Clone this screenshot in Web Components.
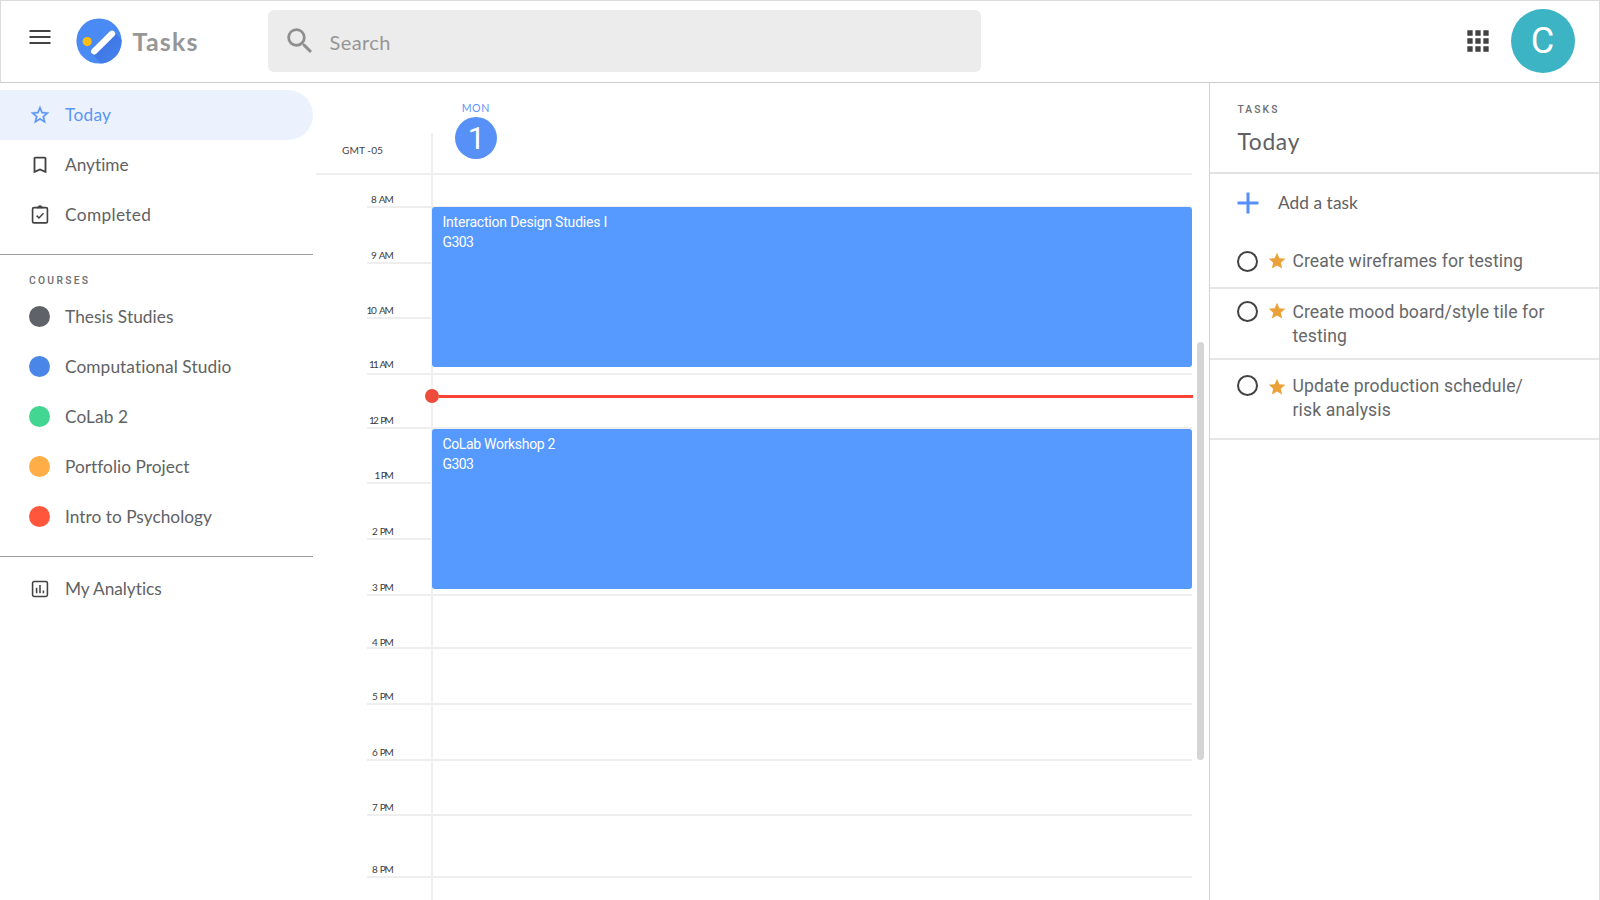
<!DOCTYPE html>
<html lang="en">
<head>
<meta charset="utf-8">
<title>Tasks</title>
<style>
html,body{margin:0;height:100%;overflow:hidden;background:#fff}
body{font-family:Lato,"Open Sans",sans-serif;color:#5f6063}
</style>
</head>
<body>
<tasks-app></tasks-app>
<script>
const define = (name, css, html, ready) => customElements.define(name, class extends HTMLElement {
  connectedCallback() {
    if (this.shadowRoot) return;
    const t = document.createElement('template');
    const a = k => this.getAttribute(k) || '';
    t.innerHTML = `<style>*{box-sizing:border-box}${css}</style>` + (typeof html === 'function' ? html(a) : html);
    this.attachShadow({ mode: 'open' }).append(t.content.cloneNode(true));
    if (ready) ready(this, a);
  }
});

const ICONS = {
  menu: '<path d="M0 1h21M0 7h21M0 13h21" transform="translate(1.5 5)" stroke="#424242" stroke-width="2" fill="none"/>',
  search: '<path fill="#8f8f8f" d="M15.5 14h-.79l-.28-.27A6.47 6.47 0 0 0 16 9.5 6.5 6.5 0 1 0 9.5 16c1.61 0 3.09-.59 4.23-1.57l.27.28v.79l5 4.99L20.49 19l-4.99-5zm-6 0C7.01 14 5 11.99 5 9.5S7.01 5 9.5 5 14 7.01 14 9.5 11.99 14 9.5 14z"/>',
  apps: '<path fill="#424242" d="M4 8h4V4H4zm6 12h4v-4h-4zm-6 0h4v-4H4zm0-6h4v-4H4zm6 0h4v-4h-4zm6-10v4h4V4zm-6 4h4V4h-4zm6 6h4v-4h-4zm0 6h4v-4h-4z"/>',
  starline: '<path fill="#5b95f6" stroke="#5b95f6" stroke-width=".3" d="M22 9.24l-7.19-.62L12 2 9.19 8.63 2 9.24l5.46 4.73L5.82 21 12 17.27 18.18 21l-1.63-7.03zM12 15.4l-3.76 2.27 1-4.28-3.32-2.88 4.38-.38L12 6.1l1.71 4.04 4.38.38-3.32 2.88 1 4.28z"/>',
  star: '<path fill="#eca138" d="M12 17.27 18.18 21l-1.64-7.03L22 9.24l-7.19-.61L12 2 9.19 8.63 2 9.24l5.46 4.73L5.82 21z"/>',
  bookmark: '<path fill="#424242" d="M17 3H7c-1.1 0-2 .9-2 2v16l7-3 7 3V5c0-1.1-.9-2-2-2zm0 15-5-2.18L7 18V5h10z"/>',
  done: '<g fill="none" stroke="#424242" stroke-width="1.8"><rect x="3.9" y="4" width="16.2" height="16.6" rx="1.6"/><path d="M8.3 12.7l2.6 2.6 4.9-5.1" stroke-width="1.6"/></g><path fill="#424242" d="M8.4 4.6V3.1h1.4a2.3 2.3 0 0 1 4.4 0h1.4v1.5z"/>',
  chart: '<g fill="none" stroke="#424242" stroke-width="1.7"><rect x="3.9" y="3.9" width="16.2" height="16.2" rx="1.8"/><path d="M8.3 10.5v6.2M12 7.6v9.1M15.7 13.6v3.1"/></g>',
  plus: '<path d="M12 1.5v21M1.5 12h21" stroke="#5590f8" stroke-width="3"/>'
};
define('ui-icon', ':host{display:block;flex:none}svg{display:block;width:100%;height:100%}',
  a => `<svg viewBox="0 0 24 24">${ICONS[a('name')]}</svg>`);

/* A line of text whose tracking is adjusted so that it fills the width in "w". */
define('fit-text', ':host{display:block;width:max-content;white-space:nowrap}span{display:inline-block}',
  '<span><slot></slot></span>', (el, a) => {
    const w = parseFloat(a('w')), n = el.textContent.length;
    const span = el.shadowRoot.querySelector('span');
    el.style.letterSpacing = '0px';
    const natural = span.getBoundingClientRect().width;
    if (w && natural) {
      const s = (w - natural) / (n - 1);
      el.style.letterSpacing = s.toFixed(3) + 'px';
      el.style.marginRight = (-s).toFixed(3) + 'px';
    }
  });

define('app-logo', ':host{display:block;flex:none;width:46px;height:46px}svg{display:block}', `
<svg width="46" height="46" viewBox="0 0 46 46">
<defs><linearGradient id="s" x1="0" y1="0" x2="1" y2="1"><stop offset="0" stop-color="#3b71dc"/><stop offset=".6" stop-color="#4480ee"/></linearGradient>
<clipPath id="c"><circle cx="23" cy="23" r="22.6"/></clipPath></defs>
<circle cx="23" cy="23" r="22.6" fill="#4a8af5"/>
<g clip-path="url(#c)"><path d="M16.5 35.5 38 14 60 36 34 58z" fill="url(#s)"/></g>
<circle cx="11.2" cy="23.6" r="4.6" fill="#fbbc13"/>
<path d="M18.3 33.3 36 15.8" stroke="#fff" stroke-width="6.4" stroke-linecap="round"/>
</svg>`);

define('app-header', `
:host{display:flex;height:83px;border:1px solid #dcdcdc;border-bottom-color:#cbcbcb;padding-left:26.5px;flex:none}
.menu{width:24px;height:24px;margin-top:24px}
app-logo{margin:17px 0 0 24.4px}
.brand{margin:22.5px 0 0 10.6px;font-size:25px;line-height:34px;font-weight:700;color:#969696;width:135.5px}
.search{display:flex;width:713.5px;height:62px;margin-top:9px;border-radius:6px;background:#ececec;padding:14px 0 0 15.5px}
.search ui-icon{width:34px;height:34px}
.search fit-text{font-size:20px;line-height:28px;margin:4px 0 0 12px;color:#969696}
.apps{width:32px;height:32px;margin:24px 0 0 auto}
.me{width:64px;height:64px;border-radius:50%;background:#3cb4c4;margin:8px 24.5px 0 16.5px;color:#fff;font:36px/64px Roboto,sans-serif;text-align:center}
`, `
<ui-icon class="menu" name="menu"></ui-icon><app-logo></app-logo>
<div class="brand"><fit-text w="65">Tasks</fit-text></div>
<div class="search"><ui-icon name="search"></ui-icon><fit-text w="61">Search</fit-text></div>
<ui-icon class="apps" name="apps"></ui-icon><div class="me">C</div>`);

define('nav-item', `
:host{display:flex;align-items:center;height:50px;padding-left:29px;font-size:17.3px;line-height:24px;color:#616264}
:host([active]){background:#ebf2fe;color:#5b95f6;border-radius:0 25px 25px 0}
.lead{width:22px;height:22px;margin-right:14px;flex:none}
.dot{width:21px;height:21px;border-radius:50%;margin-right:15px;flex:none}
fit-text{position:relative;top:1px}
:host([icon]) fit-text{top:0}
`, a => (a('color') ? `<div class="dot" style="background:${a('color')}"></div>` : `<ui-icon class="lead" name="${a('icon')}"></ui-icon>`)
  + `<fit-text w="${a('w')}">${a('label')}</fit-text>`);

define('side-nav', `
:host{display:block;width:313.4px;flex:none;padding-top:7px}
hr{border:0;height:1px;background:#9b9b9b;margin:0}
.label{font:500 10.3px/14px Roboto,sans-serif;color:#6c6d70;margin:19px 0 0 29px;padding-bottom:3px}
.group{padding-bottom:14px}.group.b{padding-bottom:15px}`, `
<div class="group"><nav-item active icon="starline" label="Today" w="46"></nav-item>
<nav-item icon="bookmark" label="Anytime" w="64"></nav-item>
<nav-item icon="done" label="Completed" w="86"></nav-item></div><hr>
<div class="label"><fit-text w="59">COURSES</fit-text></div>
<div class="group b">
<nav-item color="#5f6269" label="Thesis Studies" w="108.5"></nav-item>
<nav-item color="#4a86e8" label="Computational Studio" w="166.5"></nav-item>
<nav-item color="#42d692" label="CoLab 2" w="63"></nav-item>
<nav-item color="#ffad46" label="Portfolio Project" w="124"></nav-item>
<nav-item color="#ff563c" label="Intro to Psychology" w="147"></nav-item></div><hr>
<nav-item style="margin-top:7px" icon="chart" label="My Analytics" w="97"></nav-item>`);

/* One hour: label above a rule; "h" is the row height, "gap" the space under the label. */
define('hour-row', `
:host{box-sizing:border-box;display:flex;flex-direction:column;justify-content:flex-end;border-bottom:2px solid #eeeeee;margin-left:53.5px;flex:none}
.l{width:27px;display:flex;justify-content:flex-end;font-size:10px;line-height:10px;color:#3c3c3c;word-spacing:2px}`,
  a => `<div class="l" style="margin-bottom:${a('gap')}px"><fit-text w="${a('w')}">${a('label')}</fit-text></div>`,
  (el, a) => { el.style.height = a('h') + 'px'; });

define('calendar-event', `
:host{box-sizing:border-box;display:block;position:absolute;left:119px;right:0;background:#5699ff;border-radius:3px;padding:5px 0 0 10px;color:#fff;font:14px/20px Roboto,sans-serif}`,
  a => `<fit-text w="${a('w')}">${a('label')}</fit-text><fit-text w="31.5">${a('room')}</fit-text>`);

define('day-calendar', `
:host{display:flex;width:896px;flex:none;overflow:hidden}
.main{width:879px;position:relative;display:flex;flex-direction:column}
.head{height:91.5px;border-bottom:2px solid #eeeeee;margin-left:2.6px;display:flex;flex:none}
.gmt{width:117px;border-right:2px solid #f0f0f0;margin-top:50px;padding:11px 0 0 26px;font-size:10.2px;line-height:12px;color:#444}
.day{margin:18px 0 0 22px;display:flex;flex-direction:column;align-items:center;width:43px;color:#5b95f6}
.day fit-text{font-size:10.6px;line-height:14px;margin-left:-2px}
.num{width:42px;height:42px;border-radius:50%;background:#5790f6;color:#fff;font:31px/43px Roboto,sans-serif;text-align:center;margin-top:2px}
.grid{position:relative;flex:1}
.grid::before{content:"";position:absolute;left:117.6px;top:0;bottom:0;width:2px;background:#f0f0f0}
.now{position:absolute;left:112px;right:-1px;top:214.5px;height:14px;display:flex;align-items:center}
.now i{width:14px;height:14px;border-radius:50%;background:#ee4b3b}
.now b{flex:1;height:3px;background:#fa4334}
.bar{width:7px;height:418px;border-radius:3.5px;background:#d5d5d5;margin:259px 0 0 5px}
`, `
<div class="main"><div class="head"><div class="gmt"><fit-text w="41">GMT -05</fit-text></div>
<div class="day"><fit-text w="27.5">MON</fit-text><div class="num">1</div></div></div>
<div class="grid" id="g">
<calendar-event style="top:32.5px;height:159.5px" label="Interaction Design Studies I" w="165" room="G303"></calendar-event>
<calendar-event style="top:254.5px;height:160px" label="CoLab Workshop 2" w="113" room="G303"></calendar-event>
<div class="now"><i></i><b></b></div></div></div><div class="bar"></div>`,
  el => {
    const rows = [['8 AM', 33.5, 23, 2.5], ['9 AM', 55.5, 23, 2], ['10 AM', 55, 27.5, 1.8], ['11 AM', 56, 25, 3.2], ['12 PM', 54, 25, 2],
      ['1 PM', 55, 19.5, 2], ['2 PM', 56, 22, 1.4], ['3 PM', 56, 22, 1.4], ['4 PM', 53, 22, 0], ['5 PM', 56, 22, 1.4],
      ['6 PM', 56, 22, 2], ['7 PM', 55.5, 22, 2.5], ['8 PM', 62, 22, 2.5]];
    const f = document.createElement('template');
    f.innerHTML = rows.map(r => `<hour-row label="${r[0]}" h="${r[1]}" w="${r[2]}" gap="${r[3]}"></hour-row>`).join('');
    el.shadowRoot.getElementById('g').prepend(f.content.cloneNode(true));
  });

define('task-item', `
:host{box-sizing:border-box;display:flex;border-bottom:2px solid #e6e6e6;padding-left:26.5px;flex:none}
.o{width:21px;height:21px;border:2px solid #424242;border-radius:50%;flex:none}
ui-icon{width:20px;height:20px;margin-left:9px}
.t{font:17.6px/23.5px Roboto,sans-serif;color:#66676a;margin-left:5.5px}`,
  a => `<div class="o" style="margin-top:${a('o')}px"></div><ui-icon name="star" style="margin-top:${a('s')}px"></ui-icon>
<div class="t" style="margin-top:${a('t')}px"><slot></slot></div>`,
  (el, a) => { el.style.height = a('h') + 'px'; });

define('task-panel', `
:host{box-sizing:border-box;display:flex;flex-direction:column;flex:1;border-left:1px solid #d4d4d4;border-right:1px solid #dcdcdc}
.head{height:91px;border-bottom:2px solid #e2e2e2;padding:20px 0 0 27px;flex:none}
.label{font:500 10.3px/14px Roboto,sans-serif;color:#6c6d70}
.title{font-size:22.8px;line-height:30px;margin-top:9px}
.add{display:flex;align-items:center;height:57px;margin-bottom:2px;padding-left:25.5px;font-size:17.3px}
.add ui-icon{width:24px;height:24px}
.add fit-text{margin-left:18px}`, `
<div class="head"><div class="label"><fit-text w="40">TASKS</fit-text></div><div class="title"><fit-text w="62">Today</fit-text></div></div>
<div class="add"><ui-icon name="plus"></ui-icon><fit-text w="80">Add a task</fit-text></div>
<task-item h="56" o="18" s="18" t="17"><fit-text w="230.5">Create wireframes for testing</fit-text></task-item>
<task-item h="71" o="12" s="12" t="12"><fit-text w="252">Create mood board/style tile for</fit-text><fit-text w="54.5">testing</fit-text></task-item>
<task-item h="80" o="15" s="17" t="15"><fit-text w="230.5">Update production schedule/</fit-text><fit-text w="98.5">risk analysis</fit-text></task-item>`);

define('tasks-app', `
:host{display:flex;flex-direction:column;width:1600px;height:900px;background:#fff}
main{display:flex;flex:1;min-height:0}`,
  `<app-header></app-header><main><side-nav></side-nav><day-calendar></day-calendar><task-panel></task-panel></main>`);
</script>
</body>
</html>
